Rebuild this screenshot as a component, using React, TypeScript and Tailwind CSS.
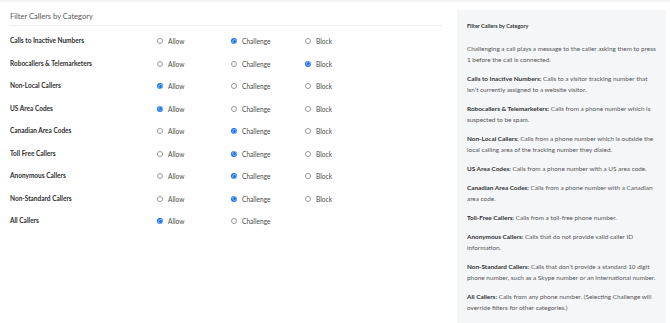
const rows: { label: string; value: string; block: boolean }[] = [
  { label: "Calls to Inactive Numbers", value: "Challenge", block: true },
  { label: "Robocallers & Telemarketers", value: "Block", block: true },
  { label: "Non-Local Callers", value: "Allow", block: true },
  { label: "US Area Codes", value: "Allow", block: true },
  { label: "Canadian Area Codes", value: "Challenge", block: true },
  { label: "Toll Free Callers", value: "Challenge", block: true },
  { label: "Anonymous Callers", value: "Challenge", block: true },
  { label: "Non-Standard Callers", value: "Challenge", block: true },
  { label: "All Callers", value: "Allow", block: false },
];

const help: { title?: string; text: string }[] = [
  { text: "Challenging a call plays a message to the caller asking them to press 1 before the call is connected." },
  { title: "Calls to Inactive Numbers:", text: "Calls to a visitor tracking number that isn’t currently assigned to a website visitor." },
  { title: "Robocallers & Telemarketers:", text: "Calls from a phone number which is suspected to be spam." },
  { title: "Non-Local Callers:", text: "Calls from a phone number which is outside the local calling area of the tracking number they dialed." },
  { title: "US Area Codes:", text: "Calls from a phone number with a US area code." },
  { title: "Canadian Area Codes:", text: "Calls from a phone number with a Canadian area code." },
  { title: "Toll-Free Callers:", text: "Calls from a toll-free phone number." },
  { title: "Anonymous Callers:", text: "Calls that do not provide valid caller ID information." },
  { title: "Non-Standard Callers:", text: "Calls that don’t provide a standard 10 digit phone number, such as a Skype number or an international number." },
  { title: "All Callers:", text: "Calls from any phone number. (Selecting Challenge will override filters for other categories.)" },
];

function Radio({ label, checked }: { label: string; checked: boolean }) {
  return (
    <div className="w-[74px] flex items-center gap-[5px]">
      {checked ? (
        <span className="w-[6px] h-[6px] rounded-full bg-[#1a73e8] flex items-center justify-center">
          <span className="w-[3px] h-[3px] rounded-full bg-[#1a73e8] ring-[0.75px] ring-white/60" />
        </span>
      ) : (
        <span className="w-[6px] h-[6px] rounded-full border border-[#9a9a9a] bg-white" />
      )}
      <span className="text-[6.6px] leading-[10px] text-[#4a4a4a]">{label}</span>
    </div>
  );
}

export default function App() {
  return (
    <div className="w-[670px] h-[323px] bg-white overflow-hidden border-t-2 border-[#f3f3f3] flex font-['Lato',sans-serif]">
      <div className="w-[443px] pl-[10px] pt-[9px]">
        <div className="text-[7.5px] leading-[12px] text-[#555] h-[15px] border-b border-[#eee]">
          Filter Callers by Category
        </div>
        <div className="pt-[4px]">
          {rows.map((r) => (
            <div key={r.label} className="h-[22.5px] flex items-center">
              <div className="w-[147px] text-[6.5px] leading-[10px] font-bold text-[#2f2f2f]">{r.label}</div>
              <Radio label="Allow" checked={r.value === "Allow"} />
              <Radio label="Challenge" checked={r.value === "Challenge"} />
              {r.block && <Radio label="Block" checked={r.value === "Block"} />}
            </div>
          ))}
        </div>
      </div>
      <div className="ml-[14px] mt-[8px] w-[209px] bg-[#f5f6f8] px-[10px] pt-[12px] text-[#555]">
        <div className="text-[5.5px] leading-[8px] font-bold text-[#333] mb-[13px]">Filter Callers by Category</div>
        <div className="flex flex-col gap-[8px]">
          {help.map((h, i) => (
            <p key={i} className="text-[6.4px] leading-[11px]">
              {h.title && <span className="font-bold text-[#333]">{h.title} </span>}
              {h.text}
            </p>
          ))}
        </div>
      </div>
    </div>
  );
}
